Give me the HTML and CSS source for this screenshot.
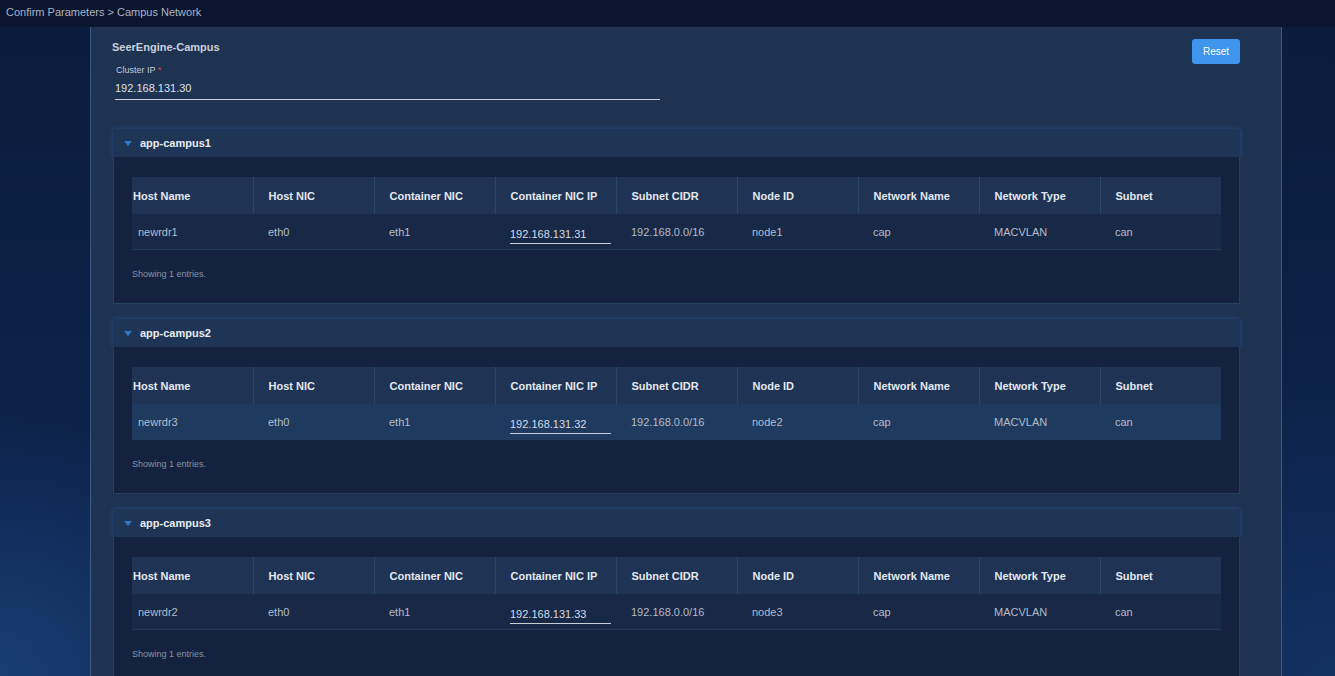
FILE: index.html
```html
<!DOCTYPE html>
<html lang="en">

<head>
	<meta charset="UTF-8">
	<meta name="viewport" content="width=device-width, initial-scale=1.0">
	<title>Confirm Parameters - Campus Network</title>
	<link rel="stylesheet" href="styles.css">
</head>

<body>
	<div class="topbar">Confirm Parameters &gt; Campus Network</div>

	<div class="panel">
		<div class="panel-head">
			<div class="panel-title">SeerEngine-Campus</div>
			<button class="btn-reset">Reset</button>
		</div>

		<div class="field">
			<div class="field-label">Cluster IP <span class="req">*</span></div>
			<div class="field-input">192.168.131.30</div>
		</div>

		<!-- app-campus1 -->
		<div class="section">
			<div class="section-head"><i class="caret"></i>app-campus1</div>
			<div class="section-body">
				<table class="grid">
					<thead>
						<tr>
							<th>Host Name</th>
							<th>Host NIC</th>
							<th>Container NIC</th>
							<th>Container NIC IP</th>
							<th>Subnet CIDR</th>
							<th>Node ID</th>
							<th>Network Name</th>
							<th>Network Type</th>
							<th>Subnet</th>
						</tr>
					</thead>
					<tbody>
						<tr>
							<td>newrdr1</td>
							<td>eth0</td>
							<td>eth1</td>
							<td><span class="cell-input">192.168.131.31</span></td>
							<td>192.168.0.0/16</td>
							<td>node1</td>
							<td>cap</td>
							<td>MACVLAN</td>
							<td>can</td>
						</tr>
					</tbody>
				</table>
				<div class="entries">Showing 1 entries.</div>
			</div>
		</div>

		<!-- app-campus2 -->
		<div class="section">
			<div class="section-head"><i class="caret"></i>app-campus2</div>
			<div class="section-body">
				<table class="grid">
					<thead>
						<tr>
							<th>Host Name</th>
							<th>Host NIC</th>
							<th>Container NIC</th>
							<th>Container NIC IP</th>
							<th>Subnet CIDR</th>
							<th>Node ID</th>
							<th>Network Name</th>
							<th>Network Type</th>
							<th>Subnet</th>
						</tr>
					</thead>
					<tbody>
						<tr class="hover">
							<td>newrdr3</td>
							<td>eth0</td>
							<td>eth1</td>
							<td><span class="cell-input">192.168.131.32</span></td>
							<td>192.168.0.0/16</td>
							<td>node2</td>
							<td>cap</td>
							<td>MACVLAN</td>
							<td>can</td>
						</tr>
					</tbody>
				</table>
				<div class="entries">Showing 1 entries.</div>
			</div>
		</div>

		<!-- app-campus3 -->
		<div class="section">
			<div class="section-head"><i class="caret"></i>app-campus3</div>
			<div class="section-body">
				<table class="grid">
					<thead>
						<tr>
							<th>Host Name</th>
							<th>Host NIC</th>
							<th>Container NIC</th>
							<th>Container NIC IP</th>
							<th>Subnet CIDR</th>
							<th>Node ID</th>
							<th>Network Name</th>
							<th>Network Type</th>
							<th>Subnet</th>
						</tr>
					</thead>
					<tbody>
						<tr>
							<td>newrdr2</td>
							<td>eth0</td>
							<td>eth1</td>
							<td><span class="cell-input">192.168.131.33</span></td>
							<td>192.168.0.0/16</td>
							<td>node3</td>
							<td>cap</td>
							<td>MACVLAN</td>
							<td>can</td>
						</tr>
					</tbody>
				</table>
				<div class="entries">Showing 1 entries.</div>
			</div>
		</div>
	</div>
</body>

</html>
```

FILE: styles.css
```css
html,
body {
	height: 100%;
}

body {
	margin: 0;
	overflow: hidden;
	font-family: "Liberation Sans", Arial, sans-serif;
	color: #b4bcc8;
	background:
		radial-gradient(circle at 0% 100%, rgba(40, 90, 160, .45) 0, rgba(40, 90, 160, 0) 260px),
		radial-gradient(circle at 100% 100%, rgba(30, 70, 130, .35) 0, rgba(30, 70, 130, 0) 300px),
		linear-gradient(#0a1c3c, #0c2248 60%, #0d2650);
}

.topbar {
	height: 27px;
	line-height: 25px;
	padding-left: 6px;
	font-size: 11px;
	color: #aab3c2;
	background: #0a1530;
}

.panel {
	width: 1192px;
	margin-left: 90px;
	padding: 12px 41px 0 22px;
	box-sizing: border-box;
	min-height: calc(100% - 27px);
	background: #1e3251;
	border-left: 1px solid #3a5a88;
	border-right: 1px solid #3a5a88;
}

.panel-head {
	display: flex;
	justify-content: space-between;
	align-items: flex-start;
}

.panel-title {
	font-size: 11px;
	font-weight: bold;
	line-height: 16px;
	color: #c9d0db;
	margin-left: -1px;
}

.btn-reset {
	width: 48px;
	height: 25px;
	padding: 0;
	border: none;
	border-radius: 3px;
	background: #3e96ec;
	color: #fff;
	font-family: inherit;
	font-size: 10px;
	cursor: pointer;
}

.field {
	margin-left: 2px;
}

.field-label {
	font-size: 9px;
	line-height: 12px;
	color: #c3cad5;
	margin-left: 1px;
}

.req {
	color: #e5483f;
}

.field-input {
	width: 545px;
	margin-top: 4px;
	padding-bottom: 3px;
	font-size: 11px;
	line-height: 16px;
	color: #dde2ea;
	border-bottom: 1px solid #c7ced8;
}

.section {
	margin-top: 15px;
}

.field + .section {
	margin-top: 29px;
}

.section-head {
	height: 28px;
	line-height: 28px;
	padding-left: 11px;
	font-size: 11px;
	font-weight: bold;
	color: #e8ecf2;
	background: #1f3555;
	box-shadow: 0 0 5px rgba(44, 110, 200, .45);
}

.caret {
	display: inline-block;
	width: 0;
	height: 0;
	margin-right: 8px;
	vertical-align: 1px;
	border-left: 4px solid transparent;
	border-right: 4px solid transparent;
	border-top: 5px solid #2b79cc;
}

.section-body {
	padding: 20px 18px 23px;
	background: #142240;
	border: 1px solid #26405f;
	border-top: none;
}

.grid {
	width: 1089px;
	border-collapse: collapse;
	table-layout: fixed;
	font-size: 11px;
}

.grid th {
	height: 37px;
	padding: 0 0 0 15px;
	text-align: left;
	font-weight: bold;
	color: #e3e8ef;
	background: #1f3354;
	border-right: 1px solid #2c4669;
}

.grid th:last-child {
	border-right: none;
}

.grid th:first-child {
	padding-left: 1px;
}

.grid td {
	height: 35px;
	padding: 0 0 0 15px;
	color: #b4bcc8;
	background: #172947;
	border-bottom: 1px solid #233a5b;
}

.grid td:first-child {
	padding-left: 6px;
}

.grid tr.hover td {
	background: #1e3a5f;
}

.cell-input {
	display: block;
	width: 101px;
	line-height: 14px;
	padding-top: 8px;
	padding-bottom: 2px;
	color: #d5dbe4;
	border-bottom: 1px solid #c7ced8;
}

.entries {
	margin-top: 18px;
	font-size: 9px;
	line-height: 12px;
	color: #8792a4;
}
```
